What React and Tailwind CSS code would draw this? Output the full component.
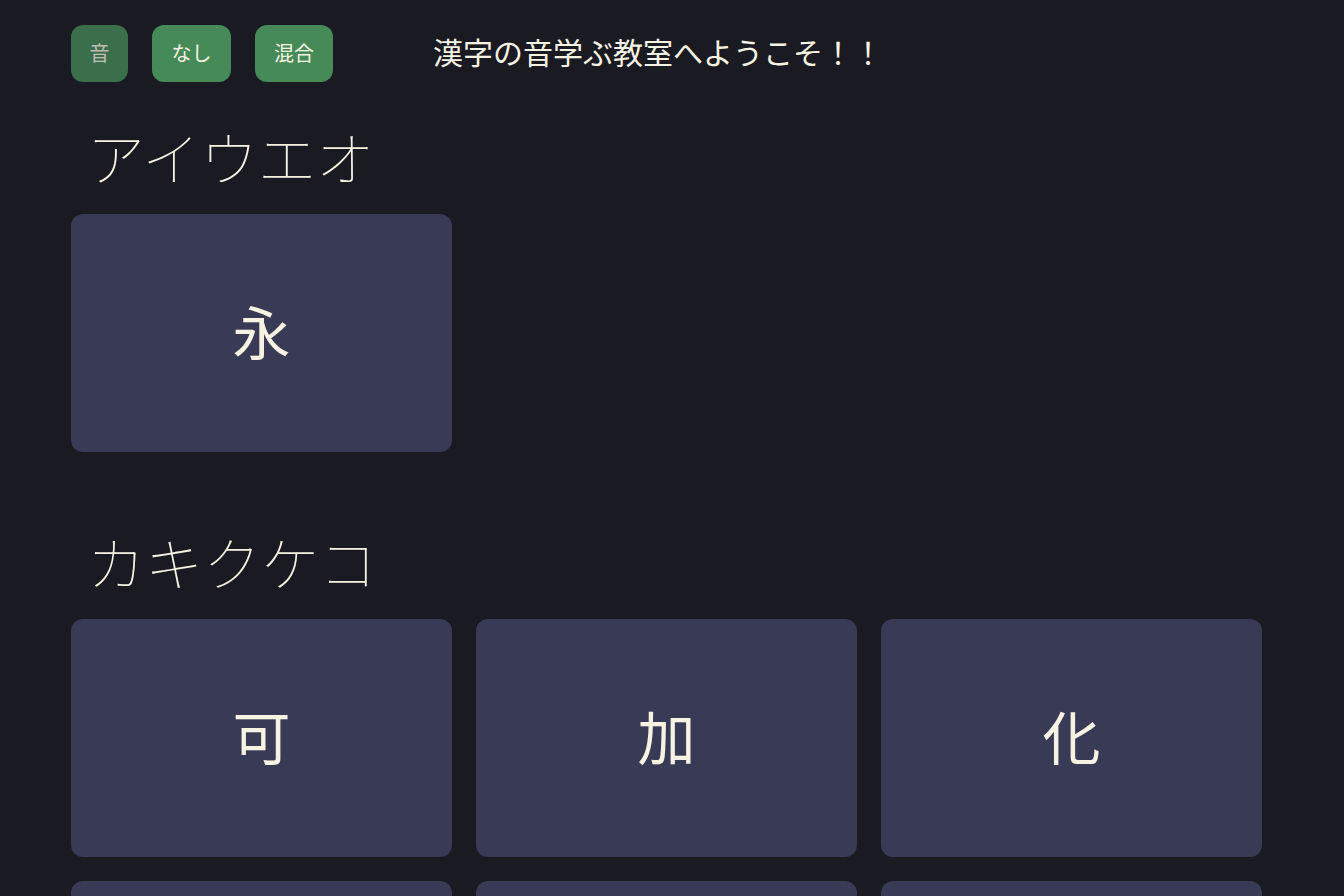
export default function App() {
    const sections = [
        { title: "アイウエオ", kanji: ["永"] },
        { title: "カキクケコ", kanji: ["可", "加", "化", "火", "下", "科"] },
    ];

    return (
        <div
            className="min-h-screen bg-[#1a1a23] text-[#f6f3e3]"
            style={{ fontFamily: '"Noto Sans CJK JP", "Noto Sans", sans-serif' }}
        >
            <header className="flex items-center pl-[71px] pt-[25px]">
                <div className="flex gap-6">
                    <button
                        type="button"
                        className="h-[57px] w-[57px] rounded-xl bg-[#468a58] pb-[2px] text-[20px] opacity-75"
                    >
                        音
                    </button>
                    <button
                        type="button"
                        className="h-[57px] w-[79px] rounded-xl bg-[#468a58] pb-[2px] text-[20px]"
                    >
                        なし
                    </button>
                    <button
                        type="button"
                        className="h-[57px] w-[78px] rounded-xl bg-[#468a58] pb-[2px] text-[20px]"
                    >
                        混合
                    </button>
                </div>
                <h1 className="ml-[100px] pb-[5px] text-[30px] leading-none">
                    漢字の音学ぶ教室へようこそ！！
                </h1>
            </header>

            <main className="pl-[71px]">
                {sections.map((section, index) => (
                    <section key={section.title} className={index === 0 ? "mt-[45px]" : "mt-[80px]"}>
                        <h2 className="pl-[16px] text-[58px] font-thin leading-none">
                            {section.title}
                        </h2>
                        <div className="mt-[29px] grid w-[1191px] grid-cols-3 gap-6">
                            {section.kanji.map((k) => (
                                <div
                                    key={k}
                                    className="flex h-[238px] items-center justify-center rounded-xl bg-[#393a55] pb-[6px] text-[58px] leading-none"
                                >
                                    {k}
                                </div>
                            ))}
                        </div>
                    </section>
                ))}
            </main>
        </div>
    );
}
